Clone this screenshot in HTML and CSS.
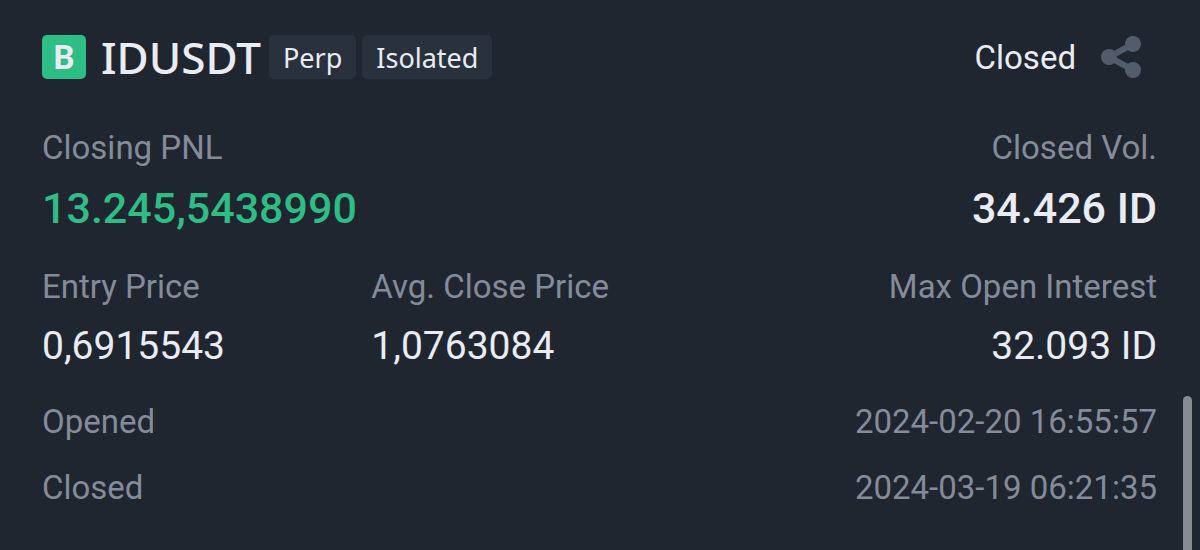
FILE: index.html
```html
<!DOCTYPE html>
<html lang="en">
  <head>
    <meta charset="UTF-8" />
    <meta name="viewport" content="width=device-width, initial-scale=1.0" />
    <title>IDUSDT Position</title>
    <link rel="stylesheet" href="styles.css">
  </head>
  <body>
    <main class="position">
      <header class="header">
        <span class="side">B</span>
        <h1 class="symbol">IDUSDT</h1>
        <span class="tag">Perp</span>
        <span class="tag">Isolated</span>
        <span class="status">Closed</span>
        <button class="share" type="button" aria-label="Share">
          <svg viewBox="0 0 40 42" width="40" height="42">
            <path
              d="M32 8 L8 21 L32 34"
              fill="none"
              stroke="#535c6a"
              stroke-width="6"
            />
            <circle cx="32" cy="8" r="8" fill="#535c6a" />
            <circle cx="8" cy="21" r="8" fill="#535c6a" />
            <circle cx="32" cy="34" r="8" fill="#535c6a" />
          </svg>
        </button>
      </header>

      <dl class="row summary">
        <div class="stat">
          <dt>Closing PNL</dt>
          <dd class="profit">13.245,5438990</dd>
        </div>
        <div class="stat end">
          <dt>Closed Vol.</dt>
          <dd>34.426 ID</dd>
        </div>
      </dl>

      <dl class="row prices">
        <div class="stat">
          <dt>Entry Price</dt>
          <dd>0,6915543</dd>
        </div>
        <div class="stat">
          <dt>Avg. Close Price</dt>
          <dd>1,0763084</dd>
        </div>
        <div class="stat end">
          <dt>Max Open Interest</dt>
          <dd>32.093 ID</dd>
        </div>
      </dl>

      <dl class="times">
        <div class="time">
          <dt>Opened</dt>
          <dd>2024-02-20 16:55:57</dd>
        </div>
        <div class="time">
          <dt>Closed</dt>
          <dd>2024-03-19 06:21:35</dd>
        </div>
      </dl>
    </main>
    <div class="scrollbar"></div>
  </body>
</html>
```

FILE: styles.css
```css
* {
  box-sizing: border-box;
}

body {
  margin: 0;
  min-height: 100vh;
  background-color: #202630;
  border-bottom: 1px solid #14131c;
  color: #eaecf3;
  font-family: Roboto, "Liberation Sans", sans-serif;
  overflow: hidden;
}

.position {
  padding: 35px 43px 40px 42px;
}

.header {
  display: flex;
  align-items: center;
  height: 44px;
}

.side,
.tag {
  height: 44px;
  border-radius: 5px;
  line-height: 46px;
}

.side {
  width: 44px;
  background-color: #2ebd85;
  font-size: 33px;
  font-weight: 700;
  text-align: center;
}

.symbol {
  margin: 0 8px 0 15px;
  font-family: "Noto Sans", sans-serif;
  font-size: 44px;
  font-weight: 500;
  line-height: 44px;
}

.tag {
  margin-right: 6px;
  padding: 0 14px;
  background-color: #29313c;
  font-family: "Noto Sans", sans-serif;
  font-size: 27px;
}

.status {
  margin-left: auto;
  font-size: 33px;
  line-height: 40px;
  padding-top: 2px;
}

.share {
  margin: 0 16px 0 25px;
  padding: 0;
  border: 0;
  background: none;
  cursor: pointer;
}

.share svg {
  display: block;
}

dl,
dd {
  margin: 0;
}

dt {
  color: #848b99;
  font-size: 33px;
  line-height: 40px;
}

.row {
  display: grid;
}

.end {
  text-align: right;
}

.summary {
  grid-template-columns: 1fr auto;
  margin-top: 49px;
}

.summary dd {
  margin-top: 12px;
  font-size: 43px;
  font-weight: 500;
  line-height: 56px;
}

.summary .profit {
  color: #2ebd85;
}

.prices {
  grid-template-columns: 7fr 11fr auto;
  margin-top: 31px;
}

.prices dd {
  margin-top: 15px;
  font-size: 39px;
  line-height: 48px;
}

.times {
  margin-top: 32px;
}

.time {
  display: flex;
  justify-content: space-between;
  margin-bottom: 26px;
}

.time dd {
  color: #848b99;
  font-size: 33px;
  line-height: 40px;
}

.scrollbar {
  position: absolute;
  top: 396px;
  right: 8px;
  bottom: 0;
  width: 9px;
  border-radius: 5px 5px 0 0;
  background-color: #888b92;
}
```
